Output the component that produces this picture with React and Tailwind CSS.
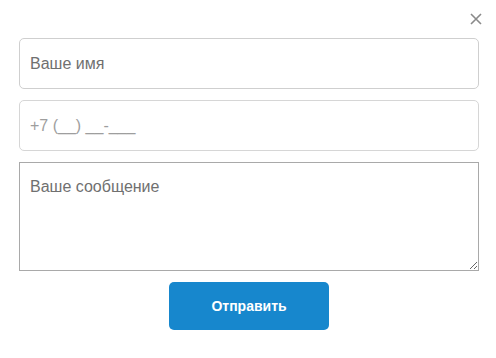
import { useState } from 'react';

export default function App() {
  const [name, setName] = useState('');
  const [phone, setPhone] = useState('');
  const [message, setMessage] = useState('');

  return (
    <div className="relative w-[496px] h-[358px] bg-white font-['Liberation_Sans',Arial,sans-serif]">
      <button
        type="button"
        aria-label="Закрыть"
        className="absolute right-[14px] top-[13px] w-[12px] h-[12px] text-[#8a8a8a]"
      >
        <svg viewBox="0 0 12 12" className="w-[12px] h-[12px]" fill="none" stroke="currentColor" strokeWidth="1.6">
          <path d="M1 1L11 11M11 1L1 11" />
        </svg>
      </button>

      <form
        onSubmit={(event) => event.preventDefault()}
        className="flex flex-col px-[19px] pt-[38px] pr-[17px]"
      >
        <input
          type="text"
          value={name}
          onChange={(event) => setName(event.target.value)}
          placeholder="Ваше имя"
          className="h-[51px] w-full rounded-[5px] border border-[#cfcfcf] px-[10px] text-[16px] text-[#333] placeholder:text-[#707070] outline-none"
        />
        <input
          type="tel"
          value={phone}
          onChange={(event) => setPhone(event.target.value)}
          placeholder="+7 (__) __-___"
          className="mt-[11px] h-[51px] w-full rounded-[5px] border border-[#d6d6d6] px-[10px] text-[16px] text-[#333] placeholder:text-[#9e9e9e] outline-none"
        />
        <textarea
          value={message}
          onChange={(event) => setMessage(event.target.value)}
          placeholder="Ваше сообщение"
          className="mt-[11px] h-[109px] w-full resize border border-[#a9a9a9] px-[10px] pt-[15px] text-[16px] leading-[18px] text-[#333] placeholder:text-[#707070] outline-none"
        />
        <div className="flex justify-center pt-[11px]">
          <button
            type="submit"
            className="w-[160px] h-[48px] rounded-[5px] bg-[#1787cd] text-white text-[14px] font-bold"
          >
            Отправить
          </button>
        </div>
      </form>
    </div>
  );
}
